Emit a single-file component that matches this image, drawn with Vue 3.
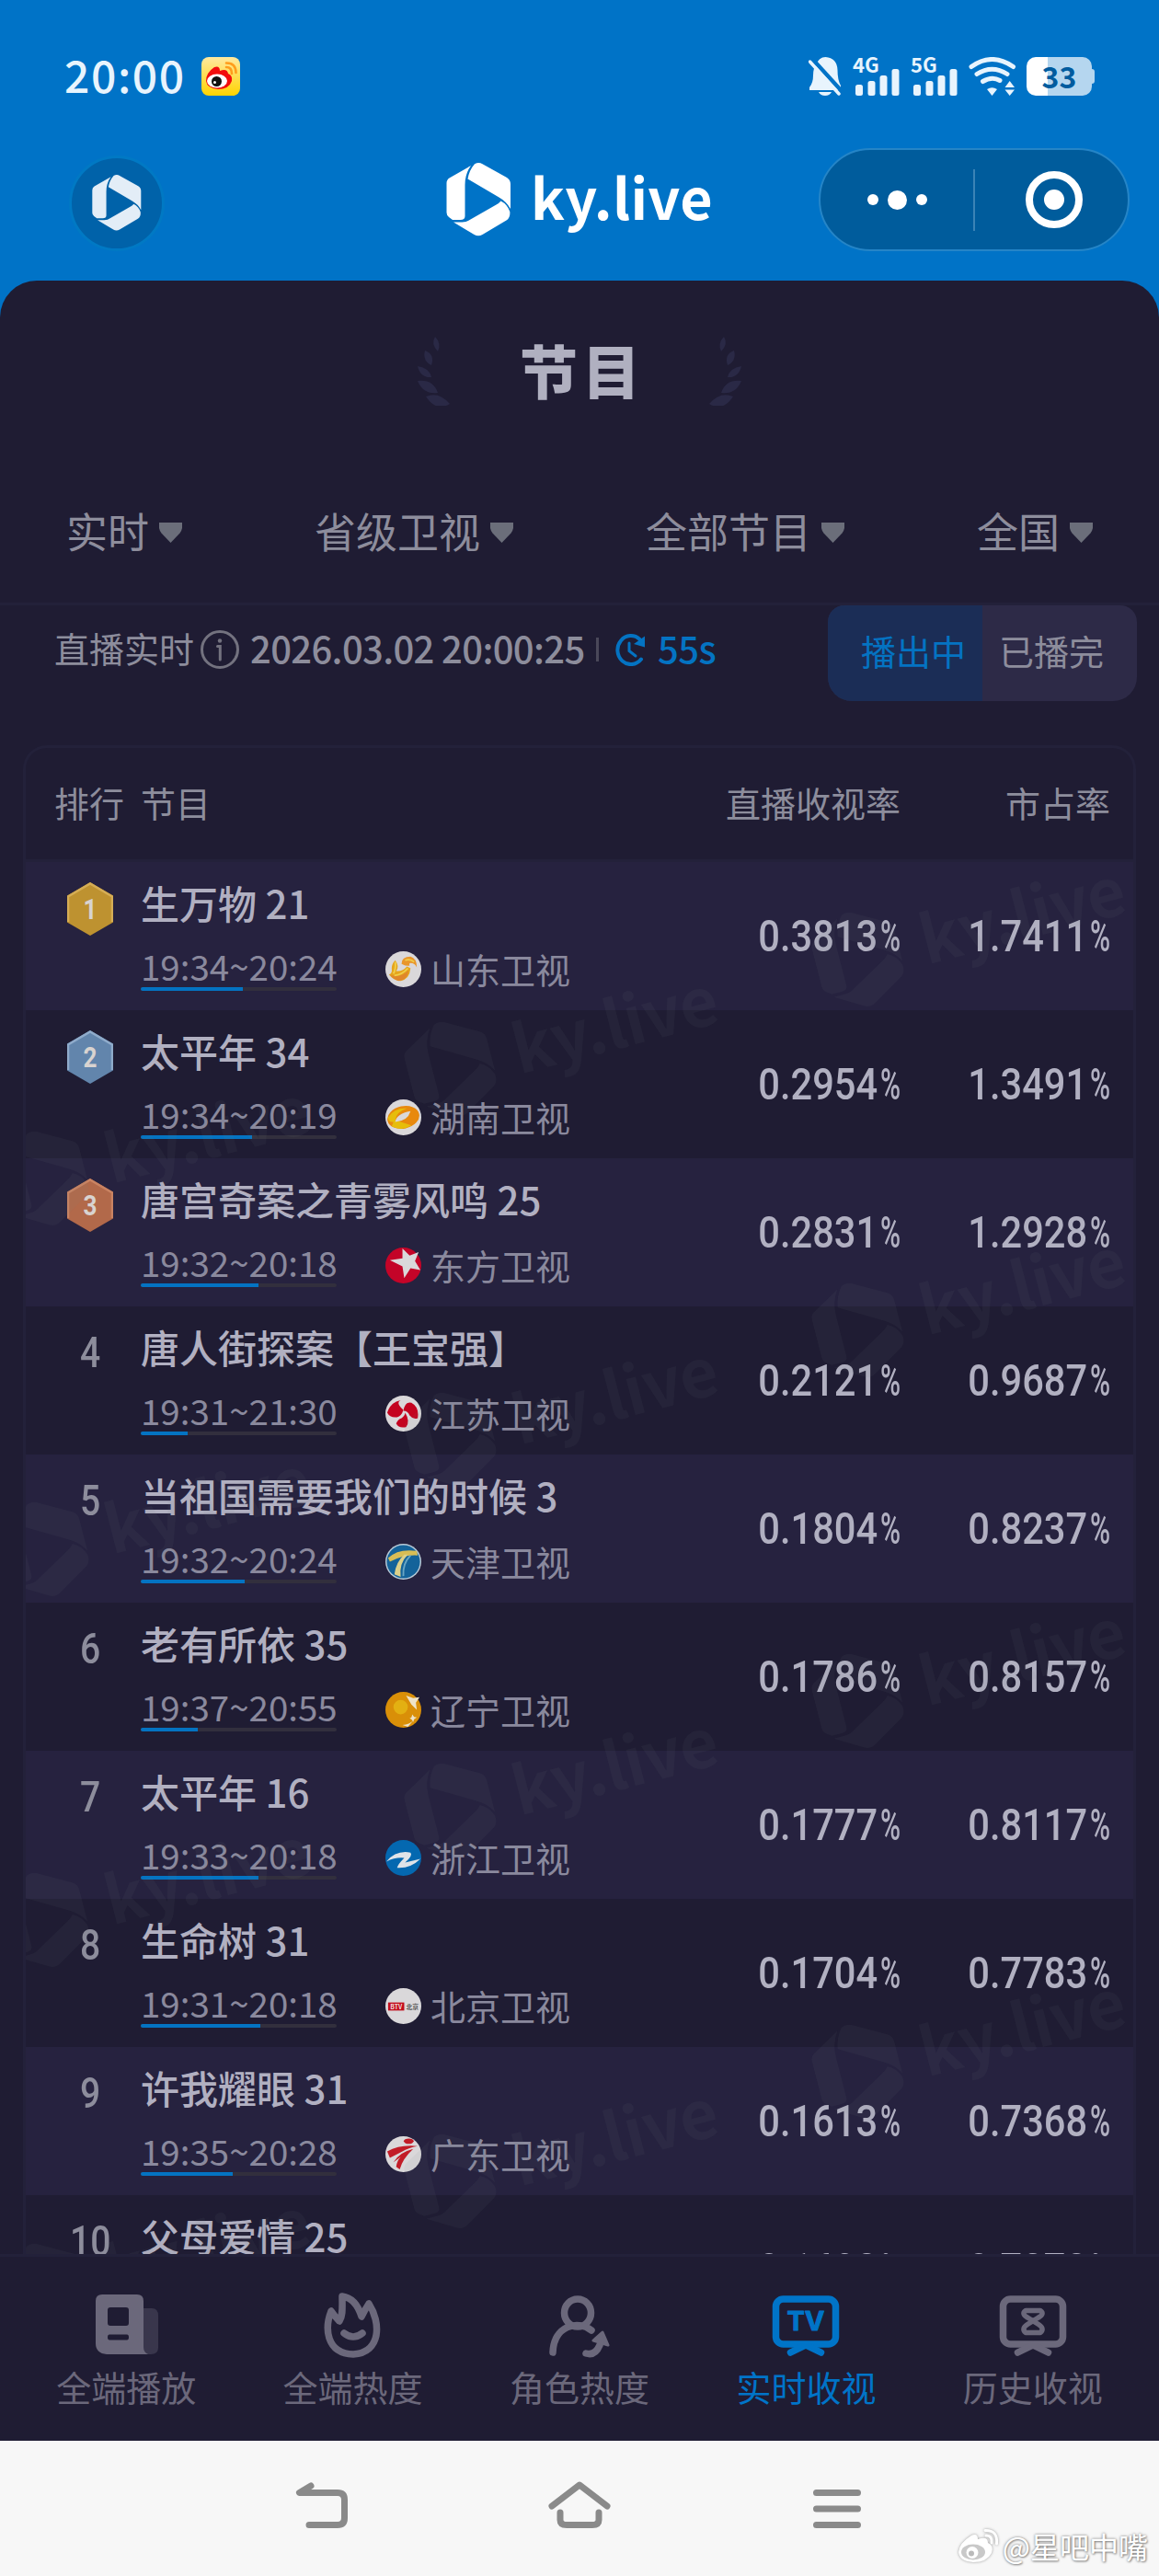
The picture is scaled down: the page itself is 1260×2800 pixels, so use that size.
<template>
  <div class="phone">
    <!-- 图形定义 -->
    <svg class="defs" width="0" height="0">
      <symbol id="ky-mark" viewBox="0 0 70 80">
        <path d="M26.5 3 L3 16.500 Q0 18.500 0 22 V54 Q0 57 2.500 59 L6.500 62 H15 Q20 62 20 58 V24 Q20 12 26.500 3 Z" />
        <path d="M30.500 1.200 Q35 -1 39 1.200 L65.500 16 Q69.500 18.500 69.500 23 V50 Q65 42 57 37.500 L23 17.500 Q24.500 8 30.500 1.200 Z" />
        <path d="M59 41.500 Q66 45 68.800 53 Q69.500 60 65 62.500 L39 78 Q34.500 80.500 30 78 L7.500 64.500 H17 Q22 64.500 26 61.500 L54 45.500 Q57 44 59 41.500 Z" />
      </symbol>
      <symbol id="laurel" viewBox="0 0 36 76">
        <path d="M20 1 Q27 8 23 17 Q15 9 20 1 Z" />
        <path d="M9 16 Q20 20 16 32 Q6 27 9 16 Z" />
        <path d="M1 33 Q14 35 16 45 Q4 46 1 33 Z" />
        <path d="M1 49 Q18 47 23 62 Q7 64 1 49 Z" />
        <path d="M10 66 Q24 60 36 74 Q21 83 10 66 Z" />
      </symbol>
    </svg>

    <!-- 系统状态栏 -->
    <div class="status-bar">
      <span class="clock">20:00</span>
      <svg class="weibo-app" width="42" height="42" viewBox="0 0 42 42">
        <defs>
          <linearGradient id="wb" x1="0" y1="0" x2="0" y2="1">
            <stop offset="0" stop-color="#ffe9a0" />
            <stop offset="1" stop-color="#ffd400" />
          </linearGradient>
        </defs>
        <rect width="42" height="42" rx="8" fill="url(#wb)" />
        <path d="M5 26 Q5 17 14 11 Q20 9 20 15 Q28 12 29 18 Q34 20 33 26 Q30 35 18 35 Q6 34 5 26 Z" fill="#f20d0d" />
        <ellipse cx="17" cy="26" rx="11" ry="7.500" fill="#fff" />
        <circle cx="16.500" cy="26.500" r="5.500" fill="#111" />
        <circle cx="14.500" cy="27.500" r="1.500" fill="#fff" />
        <path d="M27 11 Q33 11 33 18 M27 6.500 Q37.500 6.500 37.500 17" fill="none" stroke="#ff9d1c" stroke-width="2.600" stroke-linecap="round" />
      </svg>
      <div class="status-icons">
        <svg width="36" height="42" viewBox="0 0 36 42">
          <path d="M8 9 Q11 0 18.500 0 Q31 1 31.500 14 Q31.500 25 35 31 V36 H1 V33 Q5 28 5 20 Q5 12 8 9 Z M11 38 H25 Q23 42 18 42 Q13 42 11 38 Z" fill="#e8f4fd" />
          <path d="M4 2 L36 37" stroke="#0073c7" stroke-width="4.500" />
          <path d="M1.500 5 L33 40" stroke="#e8f4fd" stroke-width="3.500" stroke-linecap="round" />
        </svg>
        <svg v-for="net in ['4G', '5G']" :key="net" class="signal" width="50" height="42" viewBox="0 0 50 42">
          <text x="-1" y="16.500" class="net">{{ net }}</text>
          <rect x="2" y="30" width="8" height="12" rx="2.500" />
          <rect x="15.500" y="26" width="8" height="16" rx="2.500" />
          <rect x="28.500" y="20" width="8" height="22" rx="2.500" />
          <rect x="41.500" y="13" width="8" height="29" rx="2.500" />
        </svg>
        <svg class="wifi" width="52" height="42" viewBox="0 0 52 42">
          <g fill="none" stroke="#e8f4fd" stroke-width="5" stroke-linecap="round">
            <path d="M3 10.500 Q25.500 -5.500 48.500 10.500" />
            <path d="M9 18.500 Q25.500 8 42 18.500" />
            <path d="M15.500 26.500 Q25.500 20.500 34 25.500" />
          </g>
          <path d="M20 35 Q25.500 31.500 31 35 L25.500 42 Z M39.500 33 L44.700 26 L50 33 Z M39.500 35.500 H50 L44.700 42 Z" fill="#e8f4fd" />
        </svg>
        <div class="battery"><span>33</span></div>
      </div>
    </div>

    <!-- 小程序导航 -->
    <div class="nav">
      <div class="avatar">
        <svg width="54" height="61"><use href="#ky-mark" /></svg>
      </div>
      <div class="brand">
        <svg width="71" height="80"><use href="#ky-mark" /></svg>
        <span>ky.live</span>
      </div>
      <div class="capsule">
        <div class="dots"><i></i><i class="big"></i><i></i></div>
        <div class="target"><i></i></div>
      </div>
    </div>

    <div class="panel">
      <div class="title">
        <svg width="36" height="76"><use href="#laurel" /></svg>
        <h1>节目</h1>
        <svg class="flip" width="36" height="76"><use href="#laurel" /></svg>
      </div>

      <div class="filters">
        <div v-for="f in filters" :key="f" class="filter">
          <span>{{ f }}</span>
          <svg width="25" height="23" viewBox="0 0 25 23"><path d="M0 1 H25 V7 Q24.500 10 22.500 12.500 L12.500 23 L2.500 12.500 Q.5 10 0 7 Z" fill="#6b6e7a" /></svg>
        </div>
      </div>

      <div class="info">
        <div class="info-text">
          <span class="live">直播实时</span>
          <svg class="tip" width="42" height="42" viewBox="0 0 42 42">
            <circle cx="21" cy="21" r="19.500" fill="none" stroke="#73727f" stroke-width="3" />
            <circle cx="21" cy="11.500" r="2.200" fill="#73727f" />
            <path d="M18.500 17.500 H21.300 V32" fill="none" stroke="#73727f" stroke-width="3" stroke-linecap="round" />
          </svg>
          <span class="date">2026.03.02 20:00:25</span>
          <i class="sep"></i>
          <svg class="refresh" width="34" height="36" viewBox="0 0 34 36" fill="none" stroke="#0473c2" stroke-width="4" stroke-linecap="round">
            <path d="M29 28.500 A14.500 15.500 0 1 1 27.500 7" />
            <path d="M16 11 V19.500 L23 25" stroke-width="3" />
            <path d="M21 12 L33 3.500 V15.500 Z" fill="#0473c2" stroke="none" />
          </svg>
          <span class="count">55s</span>
        </div>
        <div class="toggle">
          <span class="on">播出中</span>
          <span>已播完</span>
        </div>
      </div>

      <!-- 排行表 -->
      <div class="table">
        <div class="thead">
          <span class="c-rank">排行</span>
          <span class="c-name">节目</span>
          <span class="c-rate">直播收视率</span>
          <span class="c-share">市占率</span>
        </div>
        <div class="tbody">
          <!-- 水印 -->
          <svg class="watermark" width="1204" height="1520" viewBox="28 936 1204 1520">
            <g v-for="m in marks" :key="m.key" :transform="`translate(${m.x} ${m.y}) rotate(-14.500)`">
              <use href="#ky-mark" x="-47" y="-53" width="93" height="106" />
              <text x="70" y="24" textLength="228">ky.live</text>
            </g>
          </svg>

          <div v-for="(row, i) in rows" :key="i" class="row">
            <div class="c-rank">
              <svg v-if="i < 3" class="medal" width="50" height="58" viewBox="0 0 50 58">
                <path d="M25 0 L50 14.500 V43.500 L25 58 L0 43.500 V14.500 Z" :fill="medals[i].body" />
                <path d="M1 43 V15.500 L25 1.500 L49 15.500 V43" fill="none" :stroke="medals[i].edge" stroke-width="2.500" />
                <text x="17.500" y="40" textLength="15" lengthAdjust="spacingAndGlyphs">{{ i + 1 }}</text>
              </svg>
              <span v-else class="rank">{{ i + 1 }}</span>
            </div>
            <div class="c-name">
              <div class="name">{{ row.name }}</div>
              <div class="meta">
                <div class="time">
                  {{ row.time }}
                  <div class="bar"><i :style="{ width: row.done + '%' }"></i></div>
                </div>
                <svg class="station" width="39" height="39" viewBox="0 0 40 40">
                  <circle cx="20" cy="20" r="20" :fill="row.bg" />
                  <g v-if="row.icon === 'sd'">
                    <path d="M11 10 Q16 17 12 22 Q19 23 24 17 L28 19 Q27 31 17 33 Q9 33 4 26 Q8 25 7 19 Q7 14 11 10 Z" fill="#e6a51c" />
                    <path d="M5 26 Q16 31 26 21 Q24 33 15 33 Q9 32 5 26 Z" fill="#e0872a" />
                    <path d="M18 14 Q18 6 28 6 Q35 8 35 18 Q33 13 28 13 Q26 13 27 16 Q24 17 18 14 Z" fill="#e9962a" />
                    <path d="M11 12 Q12 19 9 25 M10 27 Q19 26 25 19 M22 10 Q28 8 32 12" fill="none" stroke="#f0cf4c" stroke-width="1.800" />
                  </g>
                  <g v-else-if="row.icon === 'hn'">
                    <ellipse cx="20" cy="20" rx="18" ry="12.500" transform="rotate(-12 20 20)" fill="#e8890e" />
                    <path d="M3 20 Q10 9 24 10 Q12 14 11 23 L29 29 Q18 36 7 30 L9 25 Q3 26 3 20 Z" fill="#e6bd0b" />
                    <path d="M11 25 Q12 16 28 13 Q25 24 11 25 Z" fill="#dad8da" />
                  </g>
                  <path v-else-if="row.icon === 'df'" d="M19 1 L27 9 L37 5 L33 15 L39 25 L28 23 L21 34 L19 21 L5 14 L19 12 Z" fill="#dad8da" />
                  <g v-else-if="row.icon === 'js'" fill="#c40420">
                    <path d="M20 17 Q22 6 29 8 Q38 13 36 25 Q31 27 27 22 Q25 17 20 17 Z" />
                    <path d="M17 5 Q11 8 20 16 Q18 23 13 24 Q5 25 2 19 Q6 7 17 5 Z" />
                    <path d="M22 19 Q28 29 23 35 Q15 37 12 31 Q14 26 18 25 Q22 22 22 19 Z" />
                  </g>
                  <g v-else-if="row.icon === 'tj'">
                    <circle cx="20" cy="20" r="18.500" fill="#14639a" />
                    <path d="M3 16 Q14 5 35 8 L36 13 Q20 12 5 20 Z" fill="#d8bd55" />
                    <path d="M25 12 Q15 22 17 37 L10 34 Q12 20 21 12 Z" fill="#dcd08a" />
                    <path d="M28 13 Q19 22 20 36" fill="none" stroke="#69a6c4" stroke-width="2" />
                  </g>
                  <g v-else-if="row.icon === 'ln'">
                    <circle cx="17" cy="17" r="8" fill="#e3b012" />
                    <path d="M23 4 L31 7 L38 6 L34 12 L35 20 L29 14 Z M30 25 l2 3 3 .500 -3 2 -1 3 -2 -3 -2 -1 2 -1 Z M19 37 Q27 36 31 32 L25 39 Z" fill="#eee3c8" />
                  </g>
                  <path v-else-if="row.icon === 'zj'" d="M1 24 Q12 11 28 14 Q31 17 22 25 L39 21 Q28 32 13 31 Q14 27 21 20 Q11 19 1 24 Z" fill="#dfe3e8" />
                  <g v-else-if="row.icon === 'bj'">
                    <rect x="3" y="16" width="18" height="9" fill="#c30d1c" />
                    <text x="5.500" y="23.500" class="btv">BTV</text>
                    <text x="23" y="23.500" class="btv dark">北京</text>
                  </g>
                  <g v-else-if="row.icon === 'gd'" fill="#c21c27">
                    <ellipse cx="26" cy="5.500" rx="5.500" ry="3" />
                    <path d="M2 17 Q16 9 36 11 Q25 13 19 17 L5 24 Z" />
                    <path d="M9 29 Q15 18 31 14 Q19 25 16 37 L12 34 Q13 27 17 23 Z" />
                  </g>
                </svg>
                <span class="tv">{{ row.tv }}</span>
              </div>
            </div>
            <div class="c-rate"><span class="pct">{{ row.rate }}<i>%</i></span></div>
            <div class="c-share"><span class="pct">{{ row.share }}<i>%</i></span></div>
          </div>
        </div>
      </div>

      <!-- 底部标签栏 -->
      <div class="tabs">
        <div v-for="(tab, i) in tabs" :key="tab" class="tab" :class="{ active: i === 3 }">
          <svg v-if="i === 0" width="74" height="74" viewBox="0 0 74 74" fill="currentColor">
            <path d="M56 19 H65 Q72 19 72 27 V62 Q72 69 64 69 H52 Z" opacity=".35" />
            <path fill-rule="evenodd" d="M11 4 H49 Q56 4 56 11 V61 Q56 67 61 69 H16 Q4 68 4 57 V11 Q4 4 11 4 Z M20 18 Q17 18 17 21 V35 Q17 38 20 38 H37 Q40 38 40 35 V21 Q40 18 37 18 Z M19 47.500 Q17 47.500 17 50.500 Q17 53.500 19 53.500 H38 Q40 53.500 40 50.500 Q40 47.500 38 47.500 Z" />
          </svg>
          <svg v-else-if="i === 1" width="74" height="74" viewBox="0 0 74 74" fill="none" stroke="currentColor" stroke-width="7.500" stroke-linecap="round" stroke-linejoin="round">
            <path d="M13 22 C6 40 7 68 37 69 C68 67 67 34 54 14 Q50 20 46 28 Q40 8 25 6 C25 18 26 27 22 33 Q17 28 13 22 Z" />
            <path d="M27 46 Q37 54 47 46" />
          </svg>
          <svg v-else-if="i === 2" width="74" height="74" viewBox="0 0 74 74" fill="none" stroke="currentColor" stroke-width="7.500" stroke-linecap="round">
            <ellipse cx="35" cy="24" rx="14.500" ry="15" />
            <path d="M8 67 C9 38 35 31 50 43" />
            <path d="M44 68 Q54 71 59 59" />
            <path d="M52 54 L62 45 L68 59 Z" fill="currentColor" stroke-width="3" stroke-linejoin="round" />
          </svg>
          <svg v-else width="74" height="74" viewBox="0 0 74 74" fill="none" stroke="currentColor" stroke-width="7.500" stroke-linecap="round" stroke-linejoin="round">
            <rect x="4.500" y="9" width="65" height="49" rx="8" />
            <path d="M20.500 67 L37 59 L53.500 67" />
            <text v-if="i === 3" x="37" y="43" class="tv-mark">TV</text>
            <path v-else d="M29 21.500 H45 Q50 25 43 29 L31 36.500 Q24 41 29 45.500 H45 Q50 41 43 36.500 L31 29 Q24 25 29 21.500 Z" stroke-width="5.500" />
          </svg>
          <span>{{ tab }}</span>
        </div>
      </div>
    </div>

    <!-- 系统导航键 -->
    <div class="sys-nav">
      <svg width="280" height="60" viewBox="0 0 280 60"><path d="M128 9 L115.500 16.500 H157 Q164.500 16.500 164.500 24 V44 Q164.500 51.500 157 51.500 H126" /></svg>
      <svg width="280" height="60" viewBox="0 0 280 60"><path d="M110 31 L140 8 L170 31 M119 38 V46 Q119 51.500 126 51.500 H154 Q161 51.500 161 46 V38" /></svg>
      <svg width="280" height="60" viewBox="0 0 280 60"><path d="M117.500 16.500 H162.500 M117.500 34 H162.500 M117.500 51.500 H162.500" /></svg>
      <div class="author">
        <svg width="48" height="42" viewBox="0 0 48 42">
          <path d="M3 27 Q4 17 17 9 Q24 6 24 13 Q35 9 35 17 Q42 20 39 28 Q34 38 19 38 Q4 37 3 27 Z" fill="#fff" />
          <path d="M33 9 Q40 9 39 17 M32 3.500 Q46 3 44.500 18" fill="none" stroke="#fff" stroke-width="3" stroke-linecap="round" />
          <ellipse cx="19" cy="27" rx="13" ry="8.500" fill="#c9c9c9" />
          <circle cx="18" cy="27.500" r="6.500" fill="#fff" />
          <circle cx="17" cy="28.500" r="3" fill="#bbb" />
        </svg>
        <span>@星吧中嘴</span>
      </div>
    </div>
  </div>
</template>

<script setup>
const filters = ['实时', '省级卫视', '全部节目', '全国']

const tabs = ['全端播放', '全端热度', '角色热度', '实时收视', '历史收视']

const medals = [
  { body: '#be9230', edge: '#d5ad55' },
  { body: '#6285ac', edge: '#8fabca' },
  { body: '#b2694a', edge: '#c98362' }
]

const white = '#dad8da'

const rows = [
  { name: '生万物 21', time: '19:34~20:24', done: 52, tv: '山东卫视', icon: 'sd', bg: white, rate: '0.3813', share: '1.7411' },
  { name: '太平年 34', time: '19:34~20:19', done: 57, tv: '湖南卫视', icon: 'hn', bg: white, rate: '0.2954', share: '1.3491' },
  { name: '唐宫奇案之青雾风鸣 25', time: '19:32~20:18', done: 60, tv: '东方卫视', icon: 'df', bg: '#c40428', rate: '0.2831', share: '1.2928' },
  { name: '唐人街探案【王宝强】', time: '19:31~21:30', done: 24, tv: '江苏卫视', icon: 'js', bg: white, rate: '0.2121', share: '0.9687' },
  { name: '当祖国需要我们的时候 3', time: '19:32~20:24', done: 53, tv: '天津卫视', icon: 'tj', bg: '#b9cbd8', rate: '0.1804', share: '0.8237' },
  { name: '老有所依 35', time: '19:37~20:55', done: 29, tv: '辽宁卫视', icon: 'ln', bg: '#d98f08', rate: '0.1786', share: '0.8157' },
  { name: '太平年 16', time: '19:33~20:18', done: 60, tv: '浙江卫视', icon: 'zj', bg: '#0468b0', rate: '0.1777', share: '0.8117' },
  { name: '生命树 31', time: '19:31~20:18', done: 61, tv: '北京卫视', icon: 'bj', bg: white, rate: '0.1704', share: '0.7783' },
  { name: '许我耀眼 31', time: '19:35~20:28', done: 47, tv: '广东卫视', icon: 'gd', bg: white, rate: '0.1613', share: '0.7368' },
  { name: '父母爱情 25', time: '19:33~20:17', done: 62, tv: '安徽卫视', icon: 'ah', bg: white, rate: '0.1698', share: '0.7378' }
]

// 水印按斜向三列平铺
const marks = []
for (let r = 0; r < 4; r++) {
  for (let c = -1; c < 2; c++) {
    marks.push({ key: r + '_' + c, x: 491 + c * 443, y: 1161 + r * 403 - c * 119 })
  }
}
</script>

<style>
body {
  background: #1f1c33;
}
</style>

<style scoped>
.phone {
  width: 1260px;
  height: 2800px;
  display: flex;
  flex-direction: column;
  overflow: hidden;
  background: #0073c7;
  font-family: "Noto Sans CJK SC", "Noto Sans", sans-serif;
  line-height: 1;
}

.phone svg {
  flex: none;
  display: block;
}

.defs {
  position: absolute;
}

/* 状态栏 */
.status-bar {
  height: 161px;
  flex: none;
  box-sizing: border-box;
  display: flex;
  align-items: center;
  padding: 5px 73px 0 70px;
  color: #e8f4fd;
}

.clock {
  font-size: 48px;
  font-weight: 500;
  letter-spacing: 1.6px;
  width: 149px;
  padding-bottom: 6px;
}

.status-icons {
  flex: 1;
  display: flex;
  justify-content: flex-end;
  align-items: center;
}

.signal {
  fill: #e8f4fd;
  margin-left: 13px;
  overflow: visible;
}

.net {
  font-size: 22px;
  font-weight: 700;
}

.wifi {
  margin-left: 12px;
}

.battery {
  position: relative;
  width: 71px;
  height: 42px;
  margin-left: 11px;
  border-radius: 10px;
  background: linear-gradient(90deg, #fff 33%, #b5d6ef 33%);
  display: flex;
  align-items: center;
  justify-content: center;
  font-size: 32px;
  font-weight: 700;
  color: #005c9f;
}

.battery span {
  padding-bottom: 3px;
}

.battery::after {
  content: "";
  position: absolute;
  right: -3px;
  top: 13px;
  width: 4px;
  height: 16px;
  border-radius: 0 3px 3px 0;
  background: #b5d6ef;
}

/* 导航 */
.nav {
  height: 112px;
  flex: none;
  margin-bottom: 32px;
  display: grid;
  grid-template-columns: 1fr auto 1fr;
  align-items: center;
}

.avatar {
  width: 104px;
  height: 104px;
  box-sizing: border-box;
  margin: 7px 0 0 75px;
  border: 3px solid #0079c4;
  border-radius: 50%;
  background: #0062a9;
  fill: #e3edf7;
  display: flex;
  align-items: center;
  justify-content: center;
}

.brand {
  display: flex;
  align-items: center;
  gap: 21px;
  fill: #fff;
  color: #fff;
  font-size: 61px;
  font-weight: 700;
  letter-spacing: 0.3px;
}

.brand span {
  padding-bottom: 9px;
}

.capsule {
  justify-self: end;
  margin-right: 32px;
  width: 338px;
  height: 112px;
  box-sizing: border-box;
  border: 2px solid #2585c7;
  border-radius: 56px;
  background: #005c9c;
  display: flex;
  align-items: center;
}

.dots {
  width: 166px;
  height: 67px;
  border-right: 2px solid #3b83b6;
  display: flex;
  align-items: center;
  justify-content: center;
  gap: 10px;
}

.dots i {
  width: 12px;
  height: 12px;
  border-radius: 50%;
  background: #fff;
}

.dots .big {
  width: 21px;
  height: 21px;
}

.target {
  width: 46px;
  height: 46px;
  margin-left: 55px;
  border: 8px solid #fff;
  border-radius: 50%;
  display: flex;
  align-items: center;
  justify-content: center;
}

.target i {
  width: 22px;
  height: 22px;
  border-radius: 50%;
  background: #fff;
}

/* 主面板 */
.panel {
  flex: 1;
  min-height: 0;
  display: flex;
  flex-direction: column;
  border-radius: 40px 40px 0 0;
  background: #1f1c33;
}

.title {
  height: 196px;
  flex: none;
  display: flex;
  align-items: center;
  justify-content: center;
  fill: #2a2946;
}

.title h1 {
  width: 282px;
  box-sizing: border-box;
  margin: 0;
  padding: 0 0 5px 6px;
  text-align: center;
  font-size: 63px;
  font-weight: 900;
  letter-spacing: 5px;
  color: #b0b0c0;
}

.flip {
  transform: scaleX(-1);
}

.filters {
  height: 154px;
  flex: none;
  border-bottom: 3px solid #23213a;
  padding: 0 72px;
  display: flex;
  justify-content: space-between;
  align-items: center;
  font-size: 45px;
  color: #8d8d9c;
}

.filter {
  display: flex;
  align-items: center;
  gap: 11px;
}

.filter span {
  padding-bottom: 3px;
}

.info {
  height: 104px;
  flex: none;
  margin-bottom: 48px;
  padding: 0 24px 0 59px;
  display: flex;
  justify-content: space-between;
  color: #8d8d9c;
}

.info-text {
  height: 95px;
  display: flex;
  align-items: center;
  font-size: 40px;
  font-weight: 500;
}

.info-text span {
  padding-bottom: 3px;
}

.live {
  font-size: 38px;
  font-weight: 400;
  margin-right: 7px;
}

.date {
  margin-left: 12px;
  width: 364px;
  letter-spacing: -0.65px;
  white-space: nowrap;
}

.sep {
  width: 3px;
  height: 26px;
  margin: 0 17px 0 12px;
  background: #4a4859;
}

.count {
  margin-left: 13px;
  letter-spacing: -0.6px;
  color: #0473c2;
}

.toggle {
  display: flex;
  border-radius: 18px 18px 26px 26px;
  overflow: hidden;
  background: #2d2a47;
  font-size: 38px;
}

.toggle span {
  width: 113px;
  line-height: 97px;
  padding: 0 37px 7px 18px;
  white-space: nowrap;
}

.toggle .on {
  padding: 0 19px 7px 36px;
  background: #1b2d56;
  color: #0473c2;
}

/* 表格 */
.table {
  flex: 1;
  min-height: 0;
  display: flex;
  flex-direction: column;
  overflow: hidden;
  margin: 0 25px;
  border: 3px solid #23213a;
  border-bottom: 0;
  border-radius: 26px 26px 0 0;
}

.thead {
  height: 121px;
  flex: none;
  display: flex;
  align-items: center;
  font-size: 38px;
  color: #8d8d9c;
  border-bottom: 3px solid #23213a;
}

.thead span {
  padding-bottom: 3px;
}

.c-rank {
  width: 125px;
  flex: none;
}

.thead .c-rank {
  box-sizing: border-box;
  padding-left: 31px;
}

.c-name {
  flex: 1;
}

.c-rate {
  width: 200px;
  flex: none;
  text-align: right;
}

.c-share {
  width: 253px;
  flex: none;
  padding-right: 25px;
  box-sizing: border-box;
  text-align: right;
}

.tbody {
  position: relative;
  isolation: isolate;
}

.watermark {
  position: absolute;
  left: 0;
  top: 0;
  z-index: 1;
  fill: rgba(120, 130, 140, 0.075);
}

.watermark text {
  font-size: 72px;
  font-weight: 700;
}

.row {
  height: 161px;
  display: flex;
}

.row:nth-child(even) {
  background: #26223f;
}

.row .c-rank {
  display: flex;
  justify-content: center;
  align-items: flex-start;
  padding: 22px 0 0 15px;
  box-sizing: border-box;
}

.medal text {
  font: 700 31px "Roboto", sans-serif;
  fill: #d8d3d0;
}

.rank {
  font: 500 46px/56px "Roboto", sans-serif;
  color: #8d8d9c;
  transform: scaleX(0.85);
}

.name {
  margin-top: 23px;
  font-size: 42px;
  font-weight: 500;
  color: #b1b0c1;
}

.meta {
  display: flex;
  margin-top: 28px;
  font-size: 38px;
  color: #8a899d;
}

.time {
  width: 213px;
  font-size: 38.5px;
  line-height: 38px;
  white-space: nowrap;
}

.bar {
  height: 4px;
  margin-top: 5px;
  border-radius: 2px;
  background: #322f3d;
  overflow: hidden;
}

.bar i {
  display: block;
  height: 4px;
  background: #0473c2;
}

.station {
  margin: 4px 10px 0 53px;
}

.tv {
  padding-top: 4px;
}

.btv {
  font-size: 7px;
  font-weight: 700;
  fill: #f0d8d8;
}

.dark {
  fill: #555;
}

.pct {
  display: inline-block;
  font: 500 49px/161px "Roboto", sans-serif;
  color: #b1b0c1;
  transform: scaleX(0.85);
  transform-origin: right;
  white-space: nowrap;
}

.pct i {
  display: inline-block;
  width: 26px;
  margin-left: 3px;
  font-style: normal;
  transform: scaleX(0.72);
  transform-origin: left;
}

/* 标签栏 */
.tabs {
  height: 203px;
  flex: none;
  box-sizing: border-box;
  border-top: 3px solid #23213a;
  padding: 37px 14px 0;
  display: flex;
  background: #1f1c33;
  font-size: 38px;
  color: #6b687b;
}

.tab {
  flex: 1;
  display: flex;
  flex-direction: column;
  align-items: center;
  gap: 11px;
}

.active {
  color: #0074c8;
}

.tv-mark {
  font: 700 29px "Inter", sans-serif;
  text-anchor: middle;
  fill: currentColor;
  stroke-width: 1;
}

/* 系统导航 */
.sys-nav {
  position: relative;
  height: 147px;
  flex: none;
  display: flex;
  justify-content: center;
  padding-top: 40px;
  box-sizing: border-box;
  background: #f7f7f7;
  fill: none;
  stroke: #8a8a8a;
  stroke-width: 7px;
  stroke-linecap: round;
  stroke-linejoin: round;
}

.author {
  position: absolute;
  right: 12px;
  bottom: 11px;
  display: flex;
  align-items: center;
  gap: 3px;
  font-size: 32px;
  color: #fff;
  stroke: none;
  text-shadow: 0 0 3px #777, 1px 1px 2px #999;
}

.author svg {
  filter: drop-shadow(0 0 1.5px #999);
}

.author span {
  padding-bottom: 2px;
}
</style>
